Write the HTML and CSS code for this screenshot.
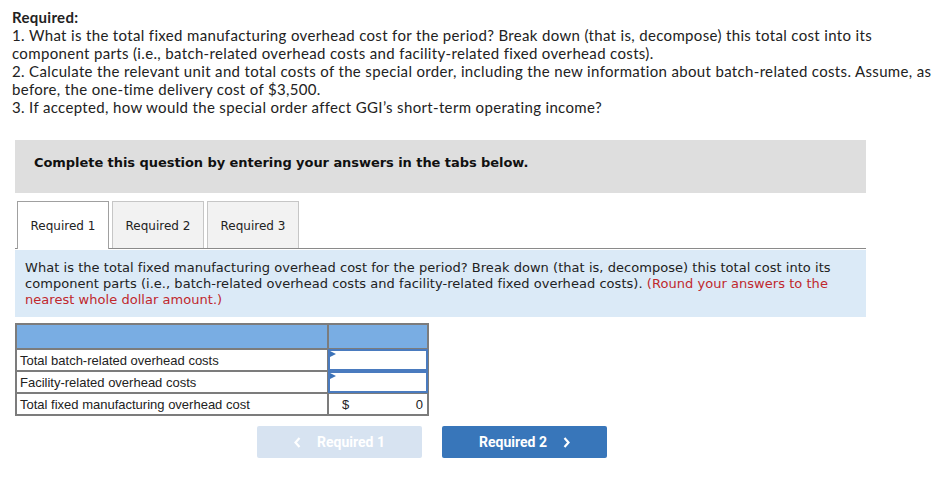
FILE: index.html
```html
<!DOCTYPE html>
<html>
<head>
<meta charset="utf-8">
<link rel="stylesheet" href="styles.css">
</head>
<body>
<div class="page">
  <div class="req">
    <div class="req-title">Required:</div>
    <div>1. What is the total fixed manufacturing overhead cost for the period? Break down (that is, decompose) this total cost into its component parts (i.e., batch-related overhead costs and facility-related fixed overhead costs).</div>
    <div>2. Calculate the relevant unit and total costs of the special order, including the new information about batch-related costs. Assume, as before, the one-time delivery cost of $3,500.</div>
    <div>3. If accepted, how would the special order affect GGI’s short-term operating income?</div>
  </div>

  <div class="complete">Complete this question by entering your answers in the tabs below.</div>

  <div class="tabs">
    <div class="tab active">Required 1</div>
    <div class="tab">Required 2</div>
    <div class="tab">Required 3</div>
  </div>

  <div class="info">What is the total fixed manufacturing overhead cost for the period? Break down (that is, decompose) this total cost into its component parts (i.e., batch-related overhead costs and facility-related fixed overhead costs). <span class="red">(Round your answers to the nearest whole dollar amount.)</span></div>

  <table class="grid">
    <tr class="head"><td class="c1"></td><td class="c2"></td></tr>
    <tr><td class="c1">Total batch-related overhead costs</td><td class="c2 inp"><div class="box"><span class="flag"></span></div></td></tr>
    <tr><td class="c1">Facility-related overhead costs</td><td class="c2 inp"><div class="box"><span class="flag"></span></div></td></tr>
    <tr><td class="c1">Total fixed manufacturing overhead cost</td><td class="c2"><div class="total"><span>$</span><span>0</span></div></td></tr>
  </table>

  <div class="nav">
    <div class="btn disabled"><svg class="chev-l" width="7" height="11" viewBox="0 0 7 11"><polyline points="5.5,1 1.5,5.5 5.5,10" fill="none" stroke="#fff" stroke-width="2.2"/></svg>Required 1</div>
    <div class="btn primary">Required 2<svg class="chev-r" width="7" height="11" viewBox="0 0 7 11"><polyline points="1.5,1 5.5,5.5 1.5,10" fill="none" stroke="#fff" stroke-width="2.2"/></svg></div>
  </div>
</div>
</body>
</html>
```

FILE: styles.css
```css
html, body {
  margin: 0;
  padding: 0;
  background: #ffffff;
}
.page {
  padding: 8px 0 0 0;
  width: 950px;
}
.req {
  font-family: Lato, "Open Sans", sans-serif;
  font-size: 15px;
  line-height: 18px;
  letter-spacing: 0.34px;
  color: #222;
  padding-left: 12px;
  padding-right: 4px;
}
.req-title {
  font-weight: bold;
  letter-spacing: 0.3px;
}
.complete {
  margin: 24px 0 0 15px;
  width: 851px;
  height: 53px;
  box-sizing: border-box;
  background: #dedede;
  padding: 15px 0 0 19px;
  line-height: 15px;
  font-family: "DejaVu Sans", Verdana, sans-serif;
  font-weight: bold;
  font-size: 13px;
  letter-spacing: -0.06px;
  color: #111;
}
.tabs {
  margin: 8px 0 0 15px;
  width: 851px;
  padding-left: 2px;
  box-sizing: border-box;
  display: flex;
  gap: 3px;
  border-bottom: 1px solid #8a8a8a;
  height: 48px;
}
.tab {
  width: 92px;
  height: 47px;
  box-sizing: border-box;
  border: 1px solid #c6c6c6;
  border-bottom: none;
  background: #f2f2f2;
  display: flex;
  align-items: center;
  justify-content: center;
  padding-top: 1px;
  font-family: "DejaVu Sans", Verdana, sans-serif;
  font-size: 12px;
  color: #222;
}
.tab.active {
  background: #fff;
  border-color: #a0a0a0;
  height: 48px;
}
.info {
  margin: 1px 0 0 15px;
  width: 851px;
  box-sizing: border-box;
  background: #dbeaf7;
  padding: 10px 10px 9px 10px;
  font-family: "DejaVu Sans", Verdana, sans-serif;
  font-size: 13px;
  line-height: 16px;
  letter-spacing: 0.04px;
  color: #222;
}
.red {
  color: #c0282d;
}
.grid {
  margin: 6px 0 0 15px;
  border-collapse: collapse;
  font-family: "Liberation Sans", Arial, sans-serif;
  font-size: 13px;
  line-height: 15px;
  color: #222;
}
.grid td {
  border: 2px solid #7c7c7c;
  padding: 0;
  height: 20px;
}
.grid .c1 {
  width: 307px;
  padding-left: 3px;
}
.grid .c2 {
  width: 98px;
  padding: 0;
}
.grid .head td {
  background: #79ade3;
  height: 23px;
}
.box {
  position: relative;
  height: 18px;
  border: 2px solid #4a7bbf;
  margin: -1px -1px -1px -1px;
  background: #fff;
}
.flag {
  position: absolute;
  left: 0;
  top: 0;
  width: 0;
  height: 0;
  border-top: 3px solid transparent;
  border-bottom: 3px solid transparent;
  border-left: 6px solid #3c72b8;
}
.total {
  display: flex;
  justify-content: space-between;
  padding: 0 4px 0 13px;
}
.nav {
  display: flex;
  gap: 20px;
  margin: 10px 0 0 257px;
}
.btn {
  width: 165px;
  height: 32px;
  border-radius: 2px;
  display: flex;
  align-items: center;
  justify-content: center;
  font-family: Roboto, "Liberation Sans", Arial, sans-serif;
  font-weight: bold;
  font-size: 14px;
  color: #fff;
}
.chev-l {
  margin-right: 16px;
}
.chev-r {
  margin-left: 16px;
}
.btn.disabled {
  background: #d7e3f1;
}
.btn.primary {
  background: #3876ba;
}
```
